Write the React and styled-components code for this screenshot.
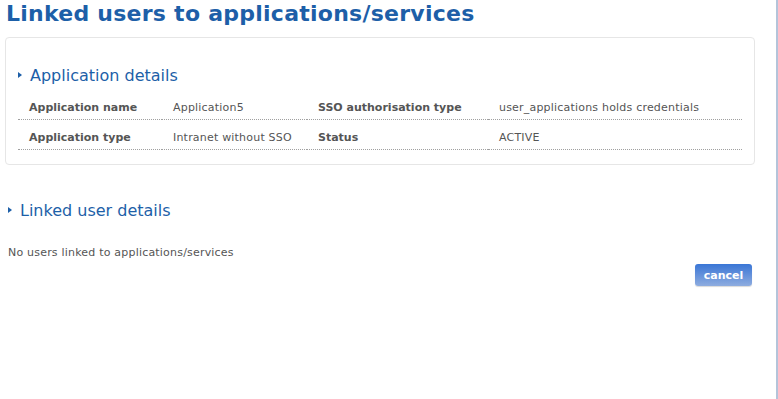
import React from "react";
import styled, { createGlobalStyle } from "styled-components";

const GlobalStyle = createGlobalStyle`
  html, body {
    margin: 0;
    padding: 0;
    background: #ffffff;
  }
  body {
    font-family: "DejaVu Sans", Verdana, sans-serif;
  }
`;

const Page = styled.div`
  width: 778px;
  height: 399px;
  border-right: 2px solid #b4c4da;
  box-sizing: border-box;
  padding: 0 21px 0 5px;
`;

const Title = styled.h1`
  margin: 0;
  padding: 1px 0 0 1px;
  height: 35px;
  box-sizing: border-box;
  font-size: 22px;
  font-weight: bold;
  color: #1d5fa8;
  letter-spacing: 0.25px;
  white-space: nowrap;
`;

const Panel = styled.div`
  border: 1px solid #e6e6e6;
  border-radius: 4px;
  padding: 25px 12px 14px 12px;
  margin-top: 2px;
`;

const Heading = styled.h2`
  display: flex;
  align-items: center;
  gap: 8px;
  margin: 0;
  font-size: 16px;
  font-weight: normal;
  color: #1d5fa8;
  height: 24px;
`;

const Arrow = styled.span`
  width: 0;
  height: 0;
  border-top: 3px solid transparent;
  border-bottom: 3px solid transparent;
  border-left: 4px solid #1d5fa8;
`;

const Grid = styled.div`
  display: grid;
  grid-template-columns: 144px 145px 181px 1fr;
  margin-top: 3px;
`;

const Cell = styled.div`
  height: 30px;
  box-sizing: border-box;
  display: flex;
  align-items: center;
  padding: 6px 0 0 11px;
  font-size: 11px;
  letter-spacing: ${(p) => (p.$label ? "0" : "0.2px")};
  color: #555555;
  font-weight: ${(p) => (p.$label ? "bold" : "normal")};
  border-bottom: 1px dotted #a0a0a0;
  white-space: nowrap;
`;

const Section = styled.div`
  margin-top: 33px;
  padding-left: 3px;
`;

const Empty = styled.p`
  margin: 24px 0 0 0;
  font-size: 11px;
  letter-spacing: 0.2px;
  color: #555555;
`;

const Actions = styled.div`
  display: flex;
  justify-content: flex-end;
  padding-right: 3px;
  margin-top: 5px;
`;

const Button = styled.button`
  width: 57px;
  height: 22px;
  border: none;
  border-radius: 3px;
  background: linear-gradient(#3a76d6, #8eacdf);
  box-shadow: 0 1px 1px rgba(0, 0, 0, 0.15);
  color: #ffffff;
  font-family: "DejaVu Sans", Verdana, sans-serif;
  font-size: 11px;
  font-weight: bold;
  padding: 0;
  cursor: pointer;
`;

const rows = [
  ["Application name", "Application5", "SSO authorisation type", "user_applications holds credentials"],
  ["Application type", "Intranet without SSO", "Status", "ACTIVE"],
];

export default function App() {
  return (
    <>
      <GlobalStyle />
      <Page>
        <Title>Linked users to applications/services</Title>
        <Panel>
          <Heading>
            <Arrow />
            Application details
          </Heading>
          <Grid>
            {rows.map((r) =>
              r.map((text, i) => (
                <Cell key={r[0] + i} $label={i % 2 === 0}>
                  {text}
                </Cell>
              ))
            )}
          </Grid>
        </Panel>
        <Section>
          <Heading>
            <Arrow />
            Linked user details
          </Heading>
          <Empty>No users linked to applications/services</Empty>
        </Section>
        <Actions>
          <Button>cancel</Button>
        </Actions>
      </Page>
    </>
  );
}
